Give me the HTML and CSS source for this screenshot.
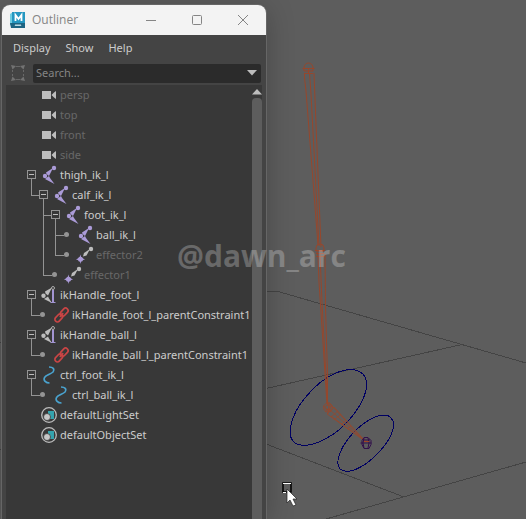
FILE: index.html
```html
<!DOCTYPE html>
<html lang="en">
<head>
<meta charset="utf-8">
<title>Outliner</title>
<link rel="stylesheet" href="styles.css">
</head>
<body>
<svg width="0" height="0" class="defs" aria-hidden="true">
  <symbol id="camera" viewBox="0 0 20 20"><path fill="#bdbdbd" d="M2 6h9v8H2zM11.500 10 14 7.500 16 6v8l-2-1.500z"/></symbol>
  <symbol id="joint" viewBox="0 0 20 20"><g fill="#ab9bd8"><circle cx="14" cy="3" r="2.200"/><circle cx="5" cy="11" r="2.200"/><path d="M13 3 6 7.500 6.500 9 9 11zM5 14 9 11 10 13 14.500 19z"/></g></symbol>
  <symbol id="effector" viewBox="0 0 20 20"><g fill="#bdbdbd"><circle cx="15" cy="4" r="2.200"/><path d="M14 4 8 8 7 11.500 10.500 10.500z"/></g><path fill="#ab9bd8" d="M4.500 9.500 5.200 12.500 9 14.500 5.200 15.500 4.500 19 3.500 15.500 0 14.500 3.500 12.500z"/><circle cx="4.500" cy="14.300" r="2.500" fill="#ab9bd8"/></symbol>
  <symbol id="handle" viewBox="0 0 20 20"><g fill="#bdbdbd"><circle cx="3.500" cy="10.700" r="2.200"/><path d="M12 2.500 5 6.500 5.500 8.500 8 10.500zM4 14 8 11.500 9 13.500 12 18z"/></g><path d="M13 3v14" stroke="#a394d2" stroke-width="2"/><path d="M10.500 17.500h5" stroke="#a394d2"/><circle cx="13" cy="3" r="1.500" fill="#383838" stroke="#aaa"/></symbol>
  <symbol id="link" viewBox="0 0 20 20"><g fill="none" stroke="#c94545" stroke-width="1.700" transform="rotate(-47 9.500 10)"><rect x="1" y="7.500" width="9" height="5" rx="2.500"/><rect x="9" y="7.500" width="9" height="5" rx="2.500"/><path d="M7 10h5"/></g></symbol>
  <symbol id="curve" viewBox="0 0 20 20"><path fill="none" stroke="#4aa3cf" stroke-width="1.600" d="M9 2C13 2 15 4 13 7 11 9 6 10 4.500 12.500 3 15.500 6 18 9.500 18"/></symbol>
  <symbol id="set" viewBox="0 0 20 20"><circle cx="9" cy="10" r="7.300" fill="none" stroke="#bdbdbd" stroke-width="1.300"/><path fill="#35a3ae" d="M8 6h6v8H8z"/><circle cx="7" cy="12" r="3.500" fill="#c7c7c7" stroke="#383838" stroke-width=".8"/></symbol>
</svg>

<svg class="scene" viewBox="0 0 526 519" preserveAspectRatio="xMinYMin slice" role="img" aria-label="Viewport">
  <g fill="none" stroke="#444" shape-rendering="crispEdges">
    <path d="M266 291.500h12L526 363M266 388.500 462 344.500M266 444 404 497M326 519 526 462M0 342.500h3M0 449.500h3"/>
  </g>
  <g fill="none" stroke="#000063" shape-rendering="crispEdges">
    <path d="M363 374C371 383 365 399 354 414 336 438 310 449 297 444 284 438 291 415 305 398 324 374 350 363 363 374z"/>
    <path d="M391 418C398 425 390 441 378 453 363 469 347 475 340 469 334 462 341 445 356 430 370 417 385 411 391 418z"/>
  </g>
  <g fill="none" stroke="#97472c">
    <path d="M304 68a4.500 5 0 0 1 9 0v3h-9zM302.500 68.500h12M304 73.500h9M308.500 68v6"/>
    <path d="M304.500 73V78L306 91 318 245M309.500 73 311 94 319 246M314 73 315 100 321 247"/>
    <path d="M316 248a4 4 0 0 1 8 0v3h-8zM315 250.500h10M316 253.500h8M316 256.500h8"/>
    <path d="M317 252 318 256 319 282 327 404M320 254 322 302 327.500 404M325 254 325.500 308 327.500 375V405"/>
  </g>
  <g fill="none" stroke="#97472c" stroke-width=".8">
    <circle cx="328" cy="407.500" r="4.500"/><circle cx="328" cy="407.500" r="2.500"/><path d="M323 406l8 6M325 412l7-6M329 402l-1 12M330 404 365 441M334 407 365 441M327 414 365 441M331 416 365 441M329 409 365 441M334 407 327 414M338 411 331 417M341 414 334 420M346 420 341 425M351 426 347 429"/>
  </g>
  <g fill="none" stroke="#32104b"><path d="M364 437.500h4l3 3v4l-2 4h-5l-2-4v-4zM360.500 443h11M364 438l-1 5 1 5M368 438l1 5-1 5M363 440h7"/></g>
  <path fill="#a24724" d="M364 441h5v1h-5z"/>
  <path fill="none" stroke="#000" stroke-width="1.500" d="M283 483h8v9h-8z"/><path stroke="#fff" d="M283 483.500h8M283 492.500h3"/>
  <path fill="#fff" stroke="#222" stroke-width=".7" d="M287 489v14l3-3 3 6 3-1-3-6h4z"/>
</svg>

<main class="window">
  <header class="titlebar">
    <svg class="logo" viewBox="0 0 16 16" role="img" aria-label="Maya"><path fill="#70cee2" d="M0 2 3 0v14l-3-1z"/><path fill="#2597c1" d="M2 0h13v11H2z"/><path fill="#1e6583" d="M0 11h15v5H1z"/><path fill="none" stroke="#fff" stroke-width="1.800" d="M5.500 9V3L8.500 7 11.500 3v6"/><path fill="none" stroke="#d5eef4" d="M5 14l1-1.500L7 14l1-1.500L9 14l1-1.500 1 1.500"/></svg>
    <h1>Outliner</h1>
    <button aria-label="Minimize"><svg viewBox="0 0 12 12"><path d="M1 6.500h10"/></svg></button>
    <button aria-label="Maximize"><svg viewBox="0 0 12 12"><rect x="1.500" y="1.500" width="9" height="9" rx="1"/></svg></button>
    <button aria-label="Close"><svg viewBox="0 0 12 12"><path d="M1 1l10 10M11 1 1 11"/></svg></button>
  </header>
  <nav class="menubar"><button>Display</button><button>Show</button><button>Help</button></nav>
  <div class="search">
    <button class="fit" aria-label="Filter"><svg viewBox="0 0 16 18"><g fill="none" stroke="#686868"><path d="M6 2.500h4M6 15.500h4M2.500 6v2M2.500 10v2M13.500 6v2M13.500 10v2"/></g><path fill="#727272" d="M1 1l5 1-3.500 3.500zM15 1l-5 1 3.500 3.500zM1 17l5-1-3.500-3.500zM15 17l-5-1 3.500-3.500z"/></svg></button>
    <div class="field"><input type="text" aria-label="Search" placeholder="Search..."><button aria-label="Search history"><svg viewBox="0 0 10 6"><path fill="#bdbdbd" d="M0 0h10L5 5.500z"/></svg></button></div>
  </div>
  <div class="panel">
    <ul class="tree">
      <li><div class="row dim"><span class="cell"></span><svg class="icon"><use href="#camera"/></svg><span>persp</span></div></li>
      <li><div class="row dim"><span class="cell"></span><svg class="icon"><use href="#camera"/></svg><span>top</span></div></li>
      <li><div class="row dim"><span class="cell"></span><svg class="icon"><use href="#camera"/></svg><span>front</span></div></li>
      <li><div class="row dim"><span class="cell"></span><svg class="icon"><use href="#camera"/></svg><span>side</span></div></li>
      <li><div class="row"><span class="cell"><button class="toggle" aria-label="Collapse"></button></span><svg class="icon"><use href="#joint"/></svg><span>thigh_ik_l</span></div>
        <ul>
          <li><div class="row"><span class="cell"><button class="toggle" aria-label="Collapse"></button></span><svg class="icon"><use href="#joint"/></svg><span>calf_ik_l</span></div>
            <ul>
              <li><div class="row"><span class="cell"><button class="toggle" aria-label="Collapse"></button></span><svg class="icon"><use href="#joint"/></svg><span>foot_ik_l</span></div>
                <ul>
                  <li><div class="row"><span class="cell"><i class="dot"></i></span><svg class="icon"><use href="#joint"/></svg><span>ball_ik_l</span></div></li>
                  <li><div class="row dim"><span class="cell"><i class="dot"></i></span><svg class="icon"><use href="#effector"/></svg><span>effector2</span></div></li>
                </ul>
              </li>
              <li><div class="row dim"><span class="cell"><i class="dot"></i></span><svg class="icon"><use href="#effector"/></svg><span>effector1</span></div></li>
            </ul>
          </li>
        </ul>
      </li>
      <li><div class="row"><span class="cell"><button class="toggle" aria-label="Collapse"></button></span><svg class="icon"><use href="#handle"/></svg><span>ikHandle_foot_l</span></div>
        <ul><li><div class="row"><span class="cell"><i class="dot"></i></span><svg class="icon"><use href="#link"/></svg><span>ikHandle_foot_l_parentConstraint1</span></div></li></ul>
      </li>
      <li><div class="row"><span class="cell"><button class="toggle" aria-label="Collapse"></button></span><svg class="icon"><use href="#handle"/></svg><span>ikHandle_ball_l</span></div>
        <ul><li><div class="row"><span class="cell"><i class="dot"></i></span><svg class="icon"><use href="#link"/></svg><span>ikHandle_ball_l_parentConstraint1</span></div></li></ul>
      </li>
      <li><div class="row"><span class="cell"><button class="toggle" aria-label="Collapse"></button></span><svg class="icon"><use href="#curve"/></svg><span>ctrl_foot_ik_l</span></div>
        <ul><li><div class="row"><span class="cell"><i class="dot"></i></span><svg class="icon"><use href="#curve"/></svg><span>ctrl_ball_ik_l</span></div></li></ul>
      </li>
      <li><div class="row"><span class="cell"></span><svg class="icon"><use href="#set"/></svg><span>defaultLightSet</span></div></li>
      <li><div class="row"><span class="cell"></span><svg class="icon"><use href="#set"/></svg><span>defaultObjectSet</span></div></li>
    </ul>
    <div class="scrollbar"><button aria-label="Scroll up"><svg viewBox="0 0 10 6"><path fill="#bdbdbd" d="M0 5.500h10L5 0z"/></svg></button><div class="thumb"></div></div>
  </div>
</main>
<div class="watermark">@dawn_arc</div>
</body>
</html>
```
FILE: styles.css
```css
* { box-sizing: border-box; }

body {
  display: flex;
  height: 100vh;
  margin: 0;
  padding: 5px 0 0 2px;
  overflow: hidden;
  background: #5d5d5d;
  color: #ccc;
  font: 11px/20px "Noto Sans", "Open Sans", sans-serif;
}

button {
  display: flex;
  align-items: center;
  justify-content: center;
  padding: 0;
  border: 0;
  background: none;
  color: inherit;
  font: inherit;
}

ul { margin: 0; padding: 0; list-style: none; }
svg { display: block; }
.defs { position: absolute; }

.scene {
  position: absolute;
  inset: 0;
  width: 100%;
  height: 100%;
}

.window {
  position: relative;
  display: flex;
  flex-direction: column;
  width: 50%;
  min-width: 264px;
  overflow: hidden;
  border-radius: 8px 8px 0 0;
  background: #444;
  box-shadow: 0 0 0 1px #666, 0 4px 28px rgba(0, 0, 0, 0.25);
}

.titlebar {
  display: flex;
  flex: 0 0 30px;
  align-items: center;
  padding-left: 8px;
  background: #f3f3f3;
  color: #858585;
}
.titlebar h1 { flex: 1; margin: 0 0 0 6px; font: 12px/20px "Open Sans", sans-serif; }
.titlebar button { width: 46px; height: 30px; }
.titlebar button svg { width: 12px; height: 12px; fill: none; stroke: #858585; }
.logo { width: 16px; height: 16px; }

.menubar { display: flex; flex: 0 0 26px; gap: 15px; padding-left: 11px; }

.search { display: flex; flex: 0 0 24px; align-items: center; padding: 0 5px 0 7px; }
.fit { width: 18px; height: 18px; margin-right: 6px; }
.fit svg { width: 16px; height: 18px; }
.field { display: flex; flex: 1; height: 19px; border-radius: 2px; background: #2b2b2b; }
.field input {
  flex: 1;
  min-width: 0;
  padding: 0 3px;
  border: 0;
  background: none;
  color: #ccc;
  font: inherit;
}
.field input::placeholder { color: #858585; }
.field button { width: 18px; }
.field button svg { width: 10px; height: 6px; }

.panel { display: flex; flex: 1; min-height: 0; margin: 0 4px; background: #383838; }
.tree { flex: 1; min-width: 0; padding-left: 19px; overflow: hidden; }
.tree li { position: relative; }
.tree ul { padding-left: 12px; }
.row { display: flex; height: 20px; white-space: nowrap; }
.dim { color: #686868; }
.cell { flex: 0 0 15px; padding: 5px 0 0 2px; }
.icon { flex: 0 0 20px; width: 20px; height: 20px; }

.toggle {
  width: 9px;
  height: 9px;
  border: 1px solid #949494;
}
.toggle::before { width: 5px; height: 1px; background: #bdbdbd; content: ""; }
.dot {
  display: block;
  width: 5px;
  height: 5px;
  margin: 2px 0 0 1px;
  border-radius: 50%;
  background: #949494;
}

/* Branch lines joining each child to its parent's toggle. */
.tree ul > li::before {
  position: absolute;
  top: -6px;
  left: -6px;
  width: 8px;
  height: 16px;
  border: solid #949494;
  border-width: 0 0 1px 1px;
  content: "";
}
.tree ul > li:not(:last-child)::after {
  position: absolute;
  top: 0;
  bottom: 0;
  left: -6px;
  width: 1px;
  background: #949494;
  content: "";
}

.scrollbar { display: flex; flex: 0 0 10px; flex-direction: column; }
.scrollbar button { flex: 0 0 13px; }
.scrollbar svg { width: 10px; height: 6px; }
.thumb { flex: 1; border-radius: 4px 4px 0 0; background: #5d5d5d; }

.watermark {
  position: absolute;
  top: 236px;
  left: 177px;
  color: rgba(255, 255, 255, 0.25);
  font: bold 30px/40px "Open Sans", sans-serif;
}
```
